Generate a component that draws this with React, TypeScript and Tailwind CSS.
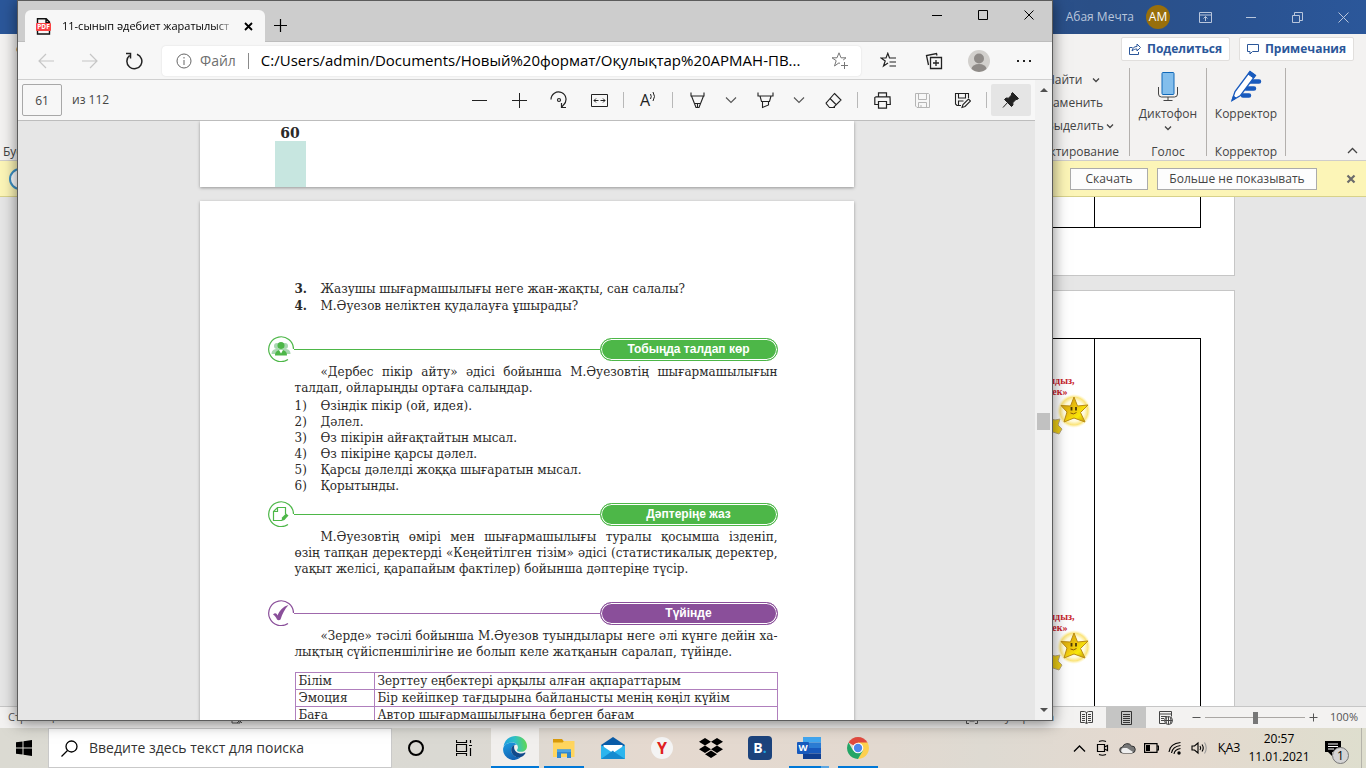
import type { ReactNode } from "react";

type IconProps = {
  size?: number;
  width?: number;
  className?: string;
  sw?: number;
  children: ReactNode;
};

const Icon = ({ size = 18, width, className = "", sw = 1, children }: IconProps) => (
  <svg
    width={width ?? size}
    height={size}
    viewBox={`0 0 ${width ?? size} ${size}`}
    fill="none"
    stroke="currentColor"
    strokeWidth={sw}
    className={`shrink-0 ${className}`}
    aria-hidden="true"
  >
    {children}
  </svg>
);

const Chevron = ({ className = "" }: { className?: string }) => (
  <Icon size={8} sw={1.3} className={className}>
    <path d="M1 2.5l3 3 3-3" />
  </Icon>
);

/* ---------- Word window ---------- */

const WordTitleBar = () => (
  <header className="flex h-[34px] shrink-0 items-center justify-end bg-[linear-gradient(90deg,#2b579a_0%,#2b579a_60%,#2a4f87_80%,#2a5392_92%,#2b579a_100%)] text-[#b9c6dc]">
    <span className="text-xs">Абая Мечта</span>
    <span className="ml-3 flex size-6 items-center justify-center rounded-full bg-[#986f0b] text-xs text-white">AM</span>
    <div className="ml-3 flex">
      <button aria-label="Параметры ленты" className="flex h-8 w-[46px] items-center justify-center">
        <Icon size={13}>
          <path d="M.5 1.500h12v10H.5zM.5 4h12M6.500 10V5.500M4.500 7.500l2-2 2 2" />
        </Icon>
      </button>
      <button aria-label="Свернуть Word" className="flex h-8 w-[46px] items-center justify-center">
        <Icon size={10}>
          <path d="M0 5.500h10" />
        </Icon>
      </button>
      <button aria-label="Восстановить" className="flex h-8 w-[46px] items-center justify-center">
        <Icon size={11}>
          <path d="M.5 3.500h7v7h-7zM2.500 3.500v-3h8v8h-3" />
        </Icon>
      </button>
      <button aria-label="Закрыть Word" className="flex h-8 w-[46px] items-center justify-center">
        <Icon size={11}>
          <path d="M.5.5l10 10M10.500.5l-10 10" />
        </Icon>
      </button>
    </div>
  </header>
);

const Ribbon = () => (
  <section className="flex h-[127px] shrink-0 flex-col border-b border-[#cfcdcb] bg-[#f3f2f1] text-xs text-[#444]">
    <div className="flex h-[34px] items-start justify-between pl-4 pr-3">
      <a href="#file" className="pt-2 text-[#444]">Файл</a>
      <div className="flex gap-[9px] pt-[3px] font-bold text-[#2b579a]">
        <button className="flex h-6 w-[109px] items-center justify-center gap-1.5 rounded-xs border border-[#e1dfdd] bg-white">
          <Icon size={12}>
            <path d="M3.500 4.500h-3v7h9V9M3 8c.5-3 2-4.500 5-4.500V1l3.500 3.500L8 8V6C6 6 4.500 6.500 3 8z" />
          </Icon>
          Поделиться
        </button>
        <button className="flex h-6 w-[115px] items-center justify-center gap-1.5 rounded-xs border border-[#e1dfdd] bg-white">
          <Icon size={12}>
            <path d="M.5 1.500h11v7h-6L3 11V8.500H.5z" />
          </Icon>
          Примечания
        </button>
      </div>
    </div>
    <div className="flex flex-1 justify-between pb-1">
      <div className="flex flex-col justify-between pl-[3px]">
        <button className="mt-9 pl-3">Вставить</button>
        <span className="leading-2">Буфер обмена</span>
      </div>
      <div className="flex">
        <div className="flex flex-col justify-between">
          <div className="flex flex-col items-start gap-[7px] pl-6 pt-1">
            <button className="flex items-center gap-2.5">Найти <Chevron /></button>
            <button>Заменить</button>
            <button className="flex items-center gap-0.5">Выделить <Chevron /></button>
          </div>
          <span className="pr-2.5 leading-2">Редактирование</span>
        </div>
        <div className="flex w-[77px] flex-col items-center justify-between border-l border-[#b3b0ad]">
          <button className="flex flex-col items-center pt-1">
            <Icon size={30} width={20}>
              <path d="M.5 15v7a3 3 0 003 3h13a3 3 0 003-3v-7M10 25v3M5.500 28.500h9" stroke="#444" />
              <rect x="4" y=".5" width="12" height="22" rx="1" fill="#83beec" stroke="#1068b8" />
            </Icon>
            <span className="mt-1">Диктофон</span>
            <Chevron className="mt-0.5" />
          </button>
          <span className="leading-2">Голос</span>
        </div>
        <div className="flex w-20 flex-col items-center justify-between border-x border-[#b3b0ad]">
          <button className="flex flex-col items-center pt-0.5">
            <Icon size={32} className="text-[#185abd]">
              <path d="M19 11.500h10M16 18.500h8M13 25.500h6" strokeWidth="4.500" strokeLinecap="round" />
              <path d="M2 30.500l3-9L20 1.500l5.500 4L10.500 25.500z" fill="#fff" strokeWidth="1.300" />
              <path d="M18 4l2-2.500 5.500 4-2 2.500zM2 30.500l1.500-4.500 2.500 2z" fill="#185abd" />
            </Icon>
            <span className="mt-1">Корректор</span>
          </button>
          <span className="leading-2">Корректор</span>
        </div>
        <button aria-label="Свернуть ленту" className="flex w-20 items-end justify-end pr-2">
          <Icon size={11} sw={1.3}>
            <path d="M1 8l4.500-4.500L10 8" />
          </Icon>
        </button>
      </div>
    </div>
  </section>
);

const NoticeBar = () => (
  <section className="flex h-9 shrink-0 items-center justify-between border-b border-[#d8d28a] bg-[#fcf5b7] pl-[9px] pr-[10px] text-xs text-[#444]">
    <span className="size-[22px] rounded-full border-2 border-[#3b8fc4] bg-white" />
    <div className="flex items-center">
      <button className="h-[22px] w-[78px] border border-[#ababab] bg-[#fdfdfd]">Скачать</button>
      <button className="ml-[9px] h-[22px] w-40 border border-[#ababab] bg-[#fdfdfd]">Больше не показывать</button>
      <button aria-label="Закрыть сообщение" className="ml-[29px] text-[#6b6b6b]">
        <Icon size={10} sw={2.2}>
          <path d="M1.500 1.500l7 7M8.500 1.500l-7 7" />
        </Icon>
      </button>
    </div>
  </section>
);

const Star = () => (
  <svg width="46" height="42" viewBox="0 3 46 42" className="shrink-0 overflow-visible" aria-hidden="true">
    <defs>
      <radialGradient id="glow">
        <stop offset="0.6" stopColor="#fffbe0" />
        <stop offset="0.82" stopColor="#fbe47a" />
        <stop offset="1" stopColor="#fff6c0" stopOpacity="0" />
      </radialGradient>
      <linearGradient id="gold" x1="0" y1="0" x2="1" y2="1">
        <stop offset="0" stopColor="#c8920c" />
        <stop offset="0.5" stopColor="#f0c80e" />
        <stop offset="0.7" stopColor="#f8e808" />
        <stop offset="1" stopColor="#b8860b" />
      </linearGradient>
    </defs>
    <path d="M0 24l7 2 5-1-2 6 4 4-3 5-9-3z" fill="#eccd18" stroke="#b9a877" strokeWidth="1" />
    <circle cx="26" cy="17" r="17" fill="url(#glow)" />
    <path d="M26 3l3.500 9 10.500-1-7.500 7.500L37 28l-11-4-10 4 3-10-6-6.500 9.500.5z" fill="url(#gold)" stroke="#b98b14" strokeWidth="1" strokeLinejoin="round" />
    <path d="M23.500 13v3.500M28 13v3.500" stroke="#4c3a08" strokeWidth="1.800" />
    <path d="M22.500 19q3 2 6-.5" fill="none" stroke="#8a5a08" />
  </svg>
);

const StarNote = () => (
  <div className="flex flex-col items-end text-[10px] font-bold leading-[11px] text-[#c8232c]">
    <span className="pr-[19px]">«Екі жұлдыз,</span>
    <span className="pr-[26px]">бір тілек»</span>
    <Star />
  </div>
);

const WordDocument = () => (
  <main className="min-h-0 flex-1 overflow-hidden bg-[#e6e6e6] font-['Liberation_Serif',serif]">
    <div className="mx-auto h-[79px] w-[1103px] border-b border-r border-[#c6c6c6] bg-white pl-20 pr-[33px]">
      <div className="flex h-[31px] border-b border-r border-black">
        <div className="flex-1 border-r border-black" />
        <div className="w-[105px]" />
      </div>
    </div>
    <div className="mx-auto mt-3.5 h-[620px] w-[1103px] border border-[#c6c6c6] bg-white pl-20 pr-[33px] pt-[47px]">
      <div className="flex h-full border-r border-t border-black">
        <div className="flex flex-1 flex-col items-end gap-[172px] border-r border-black pt-9">
          <StarNote />
          <StarNote />
        </div>
        <div className="w-[105px]" />
      </div>
    </div>
  </main>
);

const WordStatusBar = () => (
  <footer className="flex h-[22px] shrink-0 items-center justify-between border-t border-[#c6c6c6] bg-[#f3f2f1] pl-2 pr-2 text-[11px] text-[#555]">
    <div className="flex items-center gap-5">
      <span>Страница 5 из 43</span>
      <span>Число слов: 5691</span>
      <Icon size={12}>
        <path d="M1 1h8v10H1zM6 6l5 5M11 6l-5 5" />
      </Icon>
    </div>
    <div className="flex items-center">
      <button className="flex items-center gap-1.5 pr-3">
        <Icon size={12}>
          <path d="M3 .5H.5v11H3M9 .5h2.500v11H9M3.500 3h5v6h-5z" />
        </Icon>
        Фокусировка
      </button>
      <button aria-label="Режим чтения" className="flex h-[21px] w-10 items-center justify-center text-[#444]">
        <Icon size={13}>
          <path d="M.5.5h4l2 1 2-1h4v11h-4l-2 1-2-1h-4zM6.500 1.500v11M2 3.500h3M2 5.500h3M2 7.500h3M2 9.500h3M8 3.500h3M8 5.500h3M8 7.500h3M8 9.500h3" />
        </Icon>
      </button>
      <button aria-label="Разметка страницы" className="flex h-[21px] w-10 items-center justify-center bg-[#c5c5c4] text-[#333]">
        <Icon size={14} width={11}>
          <path d="M.5.5h10v13H.5zM2 3.500h7M2 5.500h7M2 7.500h7M2 9.500h7M2 11.500h7" />
        </Icon>
      </button>
      <button aria-label="Веб-документ" className="flex h-[21px] w-10 items-center justify-center text-[#444]">
        <Icon size={14}>
          <path d="M6 12.500H.5V.5h12v5M.5 3h12M2 5.500h6M2 7.500h3M2 9.500h3" />
          <circle cx="9.500" cy="9.500" r="4" fill="#f3f2f1" />
          <path d="M5.500 9.500h8M9.500 5.500v8M7.500 6.500q-1 3 0 6M11.500 6.500q1 3 0 6" />
        </Icon>
      </button>
      <button aria-label="Уменьшить масштаб" className="ml-1.5 flex">
        <Icon size={9}>
          <path d="M.5 4.500h8" />
        </Icon>
      </button>
      <input
        type="range"
        aria-label="Масштаб документа"
        defaultValue={50}
        className="mx-1 h-3 w-[100px] appearance-none bg-[linear-gradient(#aaa7a4,#aaa7a4)] bg-[length:100%_1px] bg-center bg-no-repeat [&::-webkit-slider-thumb]:h-3 [&::-webkit-slider-thumb]:w-[5px] [&::-webkit-slider-thumb]:appearance-none [&::-webkit-slider-thumb]:bg-[#777]"
      />
      <button aria-label="Увеличить масштаб" className="flex">
        <Icon size={9}>
          <path d="M.5 4.500h8M4.500.5v8" />
        </Icon>
      </button>
      <span className="w-10 text-right">100%</span>
    </div>
  </footer>
);

/* ---------- Edge window ---------- */

const TabStrip = () => (
  <header className="flex h-[41px] shrink-0 justify-between border-b border-[#bdbdbd] bg-[#cdcdcd] text-black">
    <div className="flex items-end pl-[7px]">
      <div className="-mb-px flex h-8 w-60 items-center rounded-t-md bg-[#f7f7f7] pl-[11px] pr-3">
        <svg width="15" height="17" viewBox="0 0 15 17" className="shrink-0" aria-hidden="true">
          <path d="M1.500 6V.8h8.700L13.500 4v2M1.500 12v4h12v-4M10 1v3.500h3" fill="none" stroke="#111" strokeWidth="1.400" />
          <rect y="5" width="15" height="8" rx="1" fill="#fb4343" />
          <text x="7.500" y="11.300" textAnchor="middle" fontSize="6.500" fontWeight="bold" fill="#fff">PDF</text>
        </svg>
        <span className="ml-[11px] min-w-0 flex-1 whitespace-nowrap text-[11px] [mask-image:linear-gradient(90deg,#000_88%,transparent)]">
          11-сынып әдебиет жаратылыст
        </span>
        <button aria-label="Закрыть вкладку" className="ml-2 flex">
          <Icon size={9} sw={1.8}>
            <path d="M1 1l7 7M8 1L1 8" />
          </Icon>
        </button>
      </div>
      <button aria-label="Новая вкладка" className="mb-[9px] ml-[9px] flex">
        <Icon size={13} sw={1.2}>
          <path d="M6.500 0v13M0 6.500h13" />
        </Icon>
      </button>
    </div>
    <div className="flex h-7">
      <button aria-label="Свернуть" className="flex w-[46px] items-center justify-center">
        <Icon size={10}>
          <path d="M0 5.500h10" />
        </Icon>
      </button>
      <button aria-label="Развернуть" className="flex w-[46px] items-center justify-center">
        <Icon size={10}>
          <path d="M.5.5h9v9h-9z" />
        </Icon>
      </button>
      <button aria-label="Закрыть" className="flex w-[46px] items-center justify-center">
        <Icon size={10}>
          <path d="M.5.5l9 9M9.500.5l-9 9" />
        </Icon>
      </button>
    </div>
  </header>
);

const navButton = "flex h-9 items-center justify-center";

const AddressBar = () => (
  <nav className="flex h-[38px] shrink-0 items-center border-b border-[#d0d0d0] bg-[#f7f7f7] pl-1.5 pr-1.5 text-[#222]">
    <button aria-label="Назад" disabled className={`${navButton} w-11 text-[#c6c6c6]`}>
      <Icon size={16} sw={1.2}>
        <path d="M8 1L1 8l7 7M1 8h15" />
      </Icon>
    </button>
    <button aria-label="Вперёд" disabled className={`${navButton} w-11 text-[#c6c6c6]`}>
      <Icon size={16} sw={1.2}>
        <path d="M8 1l7 7-7 7M0 8h15" />
      </Icon>
    </button>
    <button aria-label="Обновить" className={`${navButton} w-11`}>
      <Icon size={18} sw={1.5}>
        <path d="M12 2.200A7.500 7.500 0 114.500 3.500M1 1.500h4.500V6.500" />
      </Icon>
    </button>
    <div className="ml-1.5 flex h-[30px] flex-1 items-center rounded bg-white pl-3.5 pr-3 shadow-[0_0_2px_rgba(0,0,0,0.12)]">
      <Icon size={16} className="text-[#666]">
        <circle cx="8" cy="8" r="7" />
        <path d="M8 7v5M8 4v1.500" />
      </Icon>
      <span className="ml-2 text-sm text-[#6f6f6f]">Файл</span>
      <span className="mx-3 h-4 w-px bg-[#8a8a8a]" />
      <input
        aria-label="Адрес"
        readOnly
        value="C:/Users/admin/Documents/Новый%20формат/Оқулықтар%20АРМАН-ПВ..."
        className="min-w-0 flex-1 bg-transparent text-[15px] text-black outline-none"
      />
      <button aria-label="Добавить в избранное" className="ml-3 flex text-[#777]">
        <Icon size={18}>
          <path d="M9 11.500L8 10.800 3.500 14l1.700-5.300L1 5.800h5L8 .8l2 5h5l-2.800 2.200M13.500 10v7M10 13.500h7" />
        </Icon>
      </button>
    </div>
    <button aria-label="Избранное" className={`${navButton} ml-[5px] w-[45px]`}>
      <Icon size={18} sw={1.2}>
        <path d="M8 11l-4.500 3 1.700-5L1 6h5l1.800-4.700L9.500 6H16M9.500 10H16M9.500 14H16" />
      </Icon>
    </button>
    <button aria-label="Коллекции" className={`${navButton} w-[45px]`}>
      <Icon size={18} sw={1.3}>
        <path d="M5.500 5.500h11v11h-11zM11 8v6M8 11h6M3.500 13L1.500 3.500l10-2 .5 2" />
      </Icon>
    </button>
    <button aria-label="Профиль" className={`${navButton} w-[45px]`}>
      <svg width="22" height="22" viewBox="0 0 22 22" aria-hidden="true">
        <circle cx="11" cy="11" r="11" fill="#d2d0cd" />
        <circle cx="11" cy="8.500" r="5" fill="#8f8b88" />
        <path d="M3.500 19a7.500 5 0 0115 0A11 11 0 013.500 19z" fill="#8f8b88" />
      </svg>
    </button>
    <button aria-label="Параметры и другое" className={`${navButton} w-[45px]`}>
      <Icon size={16} sw={2}>
        <path d="M1 8h2M7 8h2M13 8h2" />
      </Icon>
    </button>
  </nav>
);

const Tool = ({ label, children, wide = true, disabled = false }: { label: string; children: ReactNode; wide?: boolean; disabled?: boolean }) => (
  <button aria-label={label} disabled={disabled} className={`flex h-8 items-center justify-center ${wide ? "w-10" : "w-7"} ${disabled ? "text-[#b5b5b5]" : ""}`}>
    {children}
  </button>
);

const Separator = () => <span className="mx-1 h-4 w-px bg-[#b8b8b8]" />;

const ToolChevron = () => (
  <Icon size={12} sw={1.1} className="text-[#555]">
    <path d="M1 3.500l5 5 5-5" />
  </Icon>
);

const PdfToolbar = () => (
  <div className="flex h-[41px] shrink-0 items-center justify-between border-b border-[#bdbdbd] bg-[#f7f7f7] pl-1 pr-1 text-[#222]">
    <label className="flex items-center gap-2.5 text-xs text-[#444]">
      <input aria-label="Страница" defaultValue="61" className="h-8 w-10 rounded-xs border border-[#a8a8a8] bg-[#f7f7f7] text-center outline-none" />
      из 112
    </label>
    <div className="flex items-center">
      <Tool label="Уменьшить"><Icon size={15}><path d="M0 7.500h15" /></Icon></Tool>
      <Tool label="Увеличить"><Icon size={15}><path d="M0 7.500h15M7.500 0v15" /></Icon></Tool>
      <Tool label="Повернуть">
        <Icon size={18} sw={1.2}>
          <path d="M1 8.500a7.500 7.500 0 1112.500 5.500L11.500 16.500M11.500 12v4.500H16" />
          <circle cx="9" cy="9" r="1.500" />
        </Icon>
      </Tool>
      <Tool label="По ширине">
        <Icon size={17}>
          <path d="M.5 2.500h16v12H.5zM3 8.500h4.500M9.500 8.500H14M5 6.500l-2 2 2 2M12 6.500l2 2-2 2" />
        </Icon>
      </Tool>
      <Separator />
      <Tool label="Прочесть вслух">
        <span className="text-base leading-4">A</span>
        <Icon size={14} width={6} className="-mt-1.5">
          <path d="M.5 4q1.500 2.500 0 5M3 2q3 4.500 0 9" />
        </Icon>
      </Tool>
      <Separator />
      <Tool label="Рукописный ввод">
        <Icon size={17} sw={1.1}>
          <path d="M2 .5v3.500h13V.5M2.500 4L7 15.500h3L14.500 4M6 11.500h5M8.500 12v4" />
        </Icon>
      </Tool>
      <Tool label="Параметры пера" wide={false}><ToolChevron /></Tool>
      <Tool label="Выделение">
        <Icon size={17} sw={1.1}>
          <path d="M1 .5v3.500h15V.5M3 4l1.500 5.500h8L14 4M4.500 9.500h8M5.500 9.500v6l6-2.500V9.500" />
        </Icon>
      </Tool>
      <Tool label="Параметры выделения" wide={false}><ToolChevron /></Tool>
      <Tool label="Ластик">
        <Icon size={17} sw={1.1}>
          <path d="M9.500 1.500L16 8l-7.500 7.500h-4L1.500 12a1 1 0 010-1.500zM5 6.500l6.500 6.500M4 15.500h6" />
        </Icon>
      </Tool>
      <Separator />
      <Tool label="Печать">
        <Icon size={17} sw={1.2}>
          <path d="M4.500 5V.8h8V5M4.500 12.500H.8V5.500L2 4.800h14l.3 7.700h-3.800M4.500 9.500h8v6.700h-8z" />
        </Icon>
      </Tool>
      <Tool label="Сохранить" disabled>
        <Icon size={15}>
          <path d="M.5.5h13l1 1v13H2l-1.500-1.500zM3.500.5v6h8v-6M3.500 14.500v-5h8v5M6 12v2" />
        </Icon>
      </Tool>
      <Tool label="Сохранить как">
        <Icon size={17} sw={1.1}>
          <path d="M7 13.500H3L1.500 12V1.500h13V6M4.500 1.500v4.500h7V1.500M4.500 13v-4h5M8 15.500l1-3 5.500-5.500 2 2L11 14.500z" />
        </Icon>
      </Tool>
      <Separator />
      <button aria-label="Закрепить панель" className="flex h-8 w-10 items-center justify-center rounded-xs bg-[#e5e5e5]">
        <Icon size={18}>
          <path d="M10.500 1.500l6 6-1.500 1-1 0-3.200 3.200.2 2.300-1.500 1.500-7-7L4 7l2.500.2L9.500 4V2.500zM6 11l-5 5.500" fill="currentColor" />
        </Icon>
      </button>
    </div>
  </div>
);

const GroupIcon = () => (
  <>
    <g fill="#a8d8b0">
      <circle cx="9" cy="10" r="3" />
      <circle cx="17" cy="10" r="3" />
      <path d="M3.500 18c0-4 3-5 5.500-5h8c3 0 5.500 1 5.500 5z" />
    </g>
    <g fill="#4db748">
      <circle cx="13" cy="9.500" r="3.500" />
      <path d="M7 19.500c0-4 2.500-5.500 6-5.500s6 1.500 6 5.500z" />
    </g>
    <path d="M11 14l2 3.500 2-3.500z" fill="#fff" />
  </>
);

const NoteIcon = () => (
  <>
    <path d="M14 19.500H5.500v-9l4-4h8V13M9.500 6.500v4h-4" fill="none" stroke="#4db748" strokeWidth="1.200" />
    <path d="M13.500 20l.5-3.500 4-4 2.500 2-4 4.500z" fill="#4db748" />
  </>
);

const CheckIcon = () => <path d="M5 14.500c2-2 3.500-1.500 4.500 1C11.500 10.500 15 6.500 20.500 5c-4 4.500-6 8.500-8 14.500-1 1-2.500 1-3.500 0-.8-2-2-4-4-5z" fill="#8a4f9a" />;

const Banner = ({ title, tone, children }: { title: string; tone: "green" | "purple"; children: ReactNode }) => {
  const green = tone === "green";
  return (
    <div className="flex h-[26px] items-center">
      <svg width="26" height="26" viewBox="0 0 26 26" className="shrink-0" aria-hidden="true">
        <path d="M20 23.500A12.400 12.400 0 1125.500 13" fill="none" stroke={green ? "#4db748" : "#8a4f9a"} strokeWidth="1.200" />
        {children}
      </svg>
      <span className={`h-px flex-1 ${green ? "bg-[#4db748]" : "bg-[#9f68ac]"}`} />
      <h2
        className={`flex h-[23px] w-[178px] items-center justify-center rounded-full border font-['Liberation_Sans',sans-serif] text-xs font-bold text-white shadow-[inset_0_0_0_1px_white] ${
          green ? "border-[#4db748] bg-[#4db748]" : "border-[#8a4f9a] bg-[#8a4f9a]"
        }`}
      >
        {title}
      </h2>
    </div>
  );
};

const questions = [
  ["3.", "Жазушы шығармашылығы неге жан-жақты, сан салалы?"],
  ["4.", "М.Әуезов неліктен қудалауға ұшырады?"],
];

const steps = [
  ["1)", "Өзіндік пікір (ой, идея)."],
  ["2)", "Дәлел."],
  ["3)", "Өз пікірін айғақтайтын мысал."],
  ["4)", "Өз пікіріне қарсы дәлел."],
  ["5)", "Қарсы дәлелді жоққа шығаратын мысал."],
  ["6)", "Қорытынды."],
];

const rows = [
  ["Білім", "Зерттеу еңбектері арқылы алған ақпараттарым"],
  ["Эмоция", "Бір кейіпкер тағдырына байланысты менің көңіл күйім"],
  ["Баға", "Автор шығармашылығына берген бағам"],
];

const justified = "block whitespace-nowrap [text-align-last:justify]";

const PdfPage = () => (
  <article className="mx-auto mt-3.5 h-[925px] w-[654px] bg-white pl-[68px] pr-[76px] pt-20 font-['DejaVu_Serif',serif] text-xs text-[#2b2a29] shadow-[0_1px_3px_rgba(0,0,0,0.35)]">
    <ul className="pl-[27px] leading-[17px]">
      {questions.map(([n, text]) => (
        <li key={n} className="flex">
          <b className="w-[26px]">{n}</b>
          <span>{text}</span>
        </li>
      ))}
    </ul>
    <div className="mt-[21px]">
      <Banner title="Тобыңда талдап көр" tone="green"><GroupIcon /></Banner>
    </div>
    <p className="mt-0.5 pl-[27px] leading-4">
      <span className={`${justified} pl-[26px]`}>«Дербес пікір айту» әдісі бойынша М.Әуезовтің шығармашылығын</span>
      талдап, ойларыңды ортаға салыңдар.
    </p>
    <ul className="mt-0.5 pl-[27px] leading-4">
      {steps.map(([n, text]) => (
        <li key={n} className="flex">
          <span className="w-[26px]">{n}</span>
          <span>{text}</span>
        </li>
      ))}
    </ul>
    <div className="mt-[7px]">
      <Banner title="Дәптеріңе жаз" tone="green"><NoteIcon /></Banner>
    </div>
    <p className="mt-0.5 pl-[27px] leading-4">
      <span className={`${justified} pl-[26px]`}>М.Әуезовтің өмірі мен шығармашылығы туралы қосымша ізденіп,</span>
      <span className={justified}>өзің тапқан деректерді «Кеңейтілген тізім» әдісі (статистикалық деректер,</span>
      уақыт желісі, қарапайым фактілер) бойынша дәптеріңе түсір.
    </p>
    <div className="mt-[23px]">
      <Banner title="Түйінде" tone="purple"><CheckIcon /></Banner>
    </div>
    <p className="mt-0.5 pl-[27px] leading-4">
      <span className={`${justified} pl-[26px]`}>«Зерде» тәсілі бойынша М.Әуезов туындылары неге әлі күнге дейін ха-</span>
      лықтың сүйіспеншілігіне ие болып келе жатқанын саралап, түйінде.
    </p>
    <div className="mt-3 pl-[27px]">
      <table className="w-full border-collapse leading-4">
        <tbody>
          {rows.map(([name, text]) => (
            <tr key={name}>
              <td className="w-[79px] border border-[#b07fbd] px-[3px]">{name}</td>
              <td className="border border-[#b07fbd] px-[3px]">{text}</td>
            </tr>
          ))}
        </tbody>
      </table>
    </div>
  </article>
);

const EdgeWindow = () => (
  <section className="absolute bottom-[47px] left-[17px] right-[313px] top-0 flex flex-col border border-[#5c5c5c] bg-[#e6e6e6] shadow-[0_2px_14px_rgba(0,0,0,0.5)]">
    <TabStrip />
    <AddressBar />
    <div className="flex min-h-0 flex-1">
      <div className="flex min-w-0 flex-1 flex-col">
        <PdfToolbar />
        <div className="min-h-0 flex-1 overflow-hidden">
          <div className="mx-auto flex h-[66px] w-[654px] flex-col bg-white pl-[75px] font-['DejaVu_Serif',serif] shadow-[0_1px_3px_rgba(0,0,0,0.35)]">
            <b className="w-[31px] pt-1 text-center text-sm leading-4 text-[#2b2a29]">60</b>
            <div className="w-[31px] flex-1 bg-[#c7e6e0]" />
          </div>
          <PdfPage />
        </div>
      </div>
      <div className="flex w-[17px] flex-col items-center justify-between bg-[#f1f1f1] py-1.5 text-[#505050]">
        <Icon size={8}><path d="M0 6l4-4 4 4z" fill="currentColor" stroke="none" /></Icon>
        <span className="mt-[43px] h-[17px] w-[13px] bg-[#c1c1c1]" />
        <Icon size={8}><path d="M0 2l4 4 4-4z" fill="currentColor" stroke="none" /></Icon>
      </div>
    </div>
  </section>
);

/* ---------- Taskbar ---------- */

const EdgeLogo = () => (
  <svg width="24" height="24" viewBox="0 0 24 24" aria-hidden="true">
    <defs>
      <linearGradient id="edgeTop" x1="0" y1="0.5" x2="1" y2="0.4">
        <stop offset="0" stopColor="#1f9fe0" />
        <stop offset="0.5" stopColor="#2fc2c8" />
        <stop offset="1" stopColor="#62d84e" />
      </linearGradient>
      <linearGradient id="edgeLeft" x1="0" y1="0" x2="0.4" y2="1">
        <stop offset="0" stopColor="#1b9de2" />
        <stop offset="1" stopColor="#1464b4" />
      </linearGradient>
    </defs>
    <path d="M.5 10.500C1.500 4 6.500 0 12.500 0 19 0 24 4.800 24 10c0 3.600-2.600 5.800-6 5.800-3 0-4.300-1-4-1.900.3-.6 1-1.200.9-2.700C14.800 8.500 12.300 6.500 9 6.500c-3.500 0-6.500 1.600-8.500 4z" fill="url(#edgeTop)" />
    <path d="M.2 12C.8 8.800 4.500 6.500 9 6.500c2.400 0 4.200 1 5.100 2.300-3.300-.6-6.300 2-5.900 5.600.5 4.400 4.800 7.500 9.300 6.600-1.500 1.700-3.500 2.600-6 2.900C5 24.300-.8 18.500.2 12z" fill="url(#edgeLeft)" />
    <path d="M8.200 14.400c-.3-2.500 1-4.600 3.200-5.400-1.200 4 1.100 7.900 5.600 8.400 2 .2 3.600-.2 5-.9.4 0 .6.300.4.700-1.300 2.200-3.200 3.500-5.100 4-4.300.7-8.600-2.400-9.100-6.800z" fill="#114a8b" />
  </svg>
);

const FolderLogo = () => (
  <svg width="22" height="19" viewBox="0 0 22 19" aria-hidden="true">
    <path d="M0 0h9l1.500 2H21v5H0z" fill="#d99a0a" />
    <path d="M0 3.500h9.500L11 2h10.500v16H0z" fill="#ffd55e" />
    <path d="M4 10.500h14V19h-4v-4.500H8V19H4z" fill="#2f87d0" />
    <path d="M4 10.500h14v2.500H4z" fill="#4aa3e4" />
  </svg>
);

const MailLogo = () => (
  <svg width="24" height="22" viewBox="0 0 24 22" aria-hidden="true">
    <path d="M0 8L12 0l12 8v3H0z" fill="#0a5ca8" />
    <path d="M2.500 8h19v8h-19z" fill="#fff" />
    <path d="M0 8l12 8L24 8v14H0z" fill="#2cb5ee" />
    <path d="M0 22l12-8.500 1 1.200L24 22z" fill="#158bd0" />
  </svg>
);

const DropboxLogo = () => (
  <svg width="24" height="21" viewBox="0 0 24 21" aria-hidden="true">
    <path d="M6 0l6 3.700L6 7.500 0 3.700zM18 0l6 3.700-6 3.800-6-3.800zM6 7.500l6 3.800L6 15 0 11.300zM18 7.500l6 3.800-6 3.700-6-3.700zM6 16.200l6-3.800 6 3.800-6 3.800z" fill="#000" />
  </svg>
);

const WordLogo = () => (
  <svg width="24" height="22" viewBox="0 0 24 22" aria-hidden="true">
    <path d="M6 0h18v5.500H6z" fill="#41a5ee" />
    <path d="M6 5.500h18V11H6z" fill="#2b7cd3" />
    <path d="M6 11h18v5.500H6z" fill="#185abd" />
    <path d="M6 16.500h18V22H6z" fill="#103f91" />
    <rect y="5" width="12" height="12" rx="1" fill="#185abd" />
    <text x="6" y="14.200" textAnchor="middle" fontSize="9.500" fontWeight="bold" fill="#fff">W</text>
  </svg>
);

const ChromeLogo = () => (
  <svg width="22" height="22" viewBox="0 0 22 22" aria-hidden="true">
    <path d="M11 11L1.500 5.500a11 11 0 0119 0z" fill="#e04a3f" />
    <path d="M11 11V5.500h9.500A11 11 0 0111 22l4.800-8.300z" fill="#fdd04e" />
    <path d="M11 11l4.800 2.700L11 22A11 11 0 011.500 5.500l4.700 8.200z" fill="#23a566" />
    <circle cx="11" cy="11" r="5.300" fill="#fff" />
    <circle cx="11" cy="11" r="4.200" fill="#4d87ee" />
  </svg>
);

const apps = [
  { name: "Microsoft Edge", state: "active", icon: <EdgeLogo /> },
  { name: "Проводник", state: "open", icon: <FolderLogo /> },
  { name: "Почта", state: "", icon: <MailLogo /> },
  {
    name: "Яндекс",
    state: "",
    icon: <span className="flex size-[22px] items-center justify-center rounded-full bg-[#f4f4f4] text-base font-bold text-[#e02020]">Y</span>,
  },
  { name: "Dropbox", state: "", icon: <DropboxLogo /> },
  {
    name: "Booking",
    state: "",
    icon: (
      <span className="flex size-6 items-center justify-center rounded-sm bg-[#1c437c] text-sm font-bold text-white">
        B<span className="text-[#1ba0e2]">.</span>
      </span>
    ),
  },
  { name: "Word", state: "multi", icon: <WordLogo /> },
  { name: "Google Chrome", state: "open", icon: <ChromeLogo /> },
];

const Taskbar = () => (
  <footer className="flex h-10 shrink-0 items-center justify-between bg-[linear-gradient(90deg,#dbdad2_0%,#dad9d3_33%,#e5d9cf_48%,#e2d9d0_65%,#dedad2_72%,#e5d9cf_85%,#dedece_100%)] text-black">
    <div className="flex h-full items-center">
      <button aria-label="Пуск" className="flex h-full w-12 items-center justify-center">
        <svg width="16" height="16" viewBox="0 0 16 16" aria-hidden="true">
          <path d="M0 2.300L6.500 1.400v6.100H0zM7.500 1.200L16 0v7.500H7.500zM0 8.500h6.500v6.100L0 13.700zM7.500 8.500H16V16l-8.500-1.200z" />
        </svg>
      </button>
      <label className="flex h-full w-[344px] items-center border border-[#c9c9c9] bg-white pl-3">
        <Icon size={17} sw={1.3}>
          <circle cx="10.500" cy="6.500" r="5.500" />
          <path d="M6.500 10.500L.5 16.500" />
        </Icon>
        <input
          aria-label="Поиск"
          placeholder="Введите здесь текст для поиска"
          className="ml-[11px] min-w-0 flex-1 bg-transparent text-sm outline-none placeholder:text-[#333]"
        />
      </label>
      <button aria-label="Кортана" className="flex h-full w-12 items-center justify-center">
        <Icon size={16} sw={2}>
          <circle cx="8" cy="8" r="7" />
        </Icon>
      </button>
      <button aria-label="Представление задач" className="flex h-full w-12 items-center justify-center">
        <Icon size={16} sw={1.2}>
          <path d="M.5 0v2.500h10V0M.5 16v-2.500h10V16M.5 4.500h10v7H.5zM14.500 0v3M14.500 8v8M13 5.500h3" />
        </Icon>
      </button>
      <div className="ml-[3px] flex h-full gap-px">
        {apps.map(({ name, state, icon }) => (
          <button
            key={name}
            aria-label={name}
            className={`flex h-full w-12 flex-col items-center ${state === "active" ? "bg-[#f1efed]" : ""}`}
          >
            <span className="flex flex-1 items-center justify-center pt-0.5">{icon}</span>
            <span className={`flex h-0.5 ${state === "active" ? "w-full bg-[#0078d7]" : "w-10"} ${state === "open" ? "bg-[#0078d7]" : ""}`}>
              {state === "multi" && (
                <>
                  <i className="h-full w-8 bg-[#0078d7]" />
                  <i className="h-full w-2 bg-[#5ba6e2]" />
                </>
              )}
            </span>
          </button>
        ))}
      </div>
    </div>
    <div className="flex h-full items-center text-xs">
      <button aria-label="Скрытые значки" className="flex w-6 justify-center">
        <Icon size={13} sw={1.3}><path d="M1 9.500L6.500 4 12 9.500" /></Icon>
      </button>
      <span className="flex w-6 justify-center">
        <Icon size={16} sw={1.2}>
          <path d="M4 1.500q3.500-1.500 7 0M4 14.500q3.500 1.500 7 0M2.500 4.500h7v7h-7zM9.500 7l3-1.500v5l-3-1.500" />
        </Icon>
      </span>
      <span className="flex w-6 justify-center">
        <Icon size={12} width={17}>
          <path d="M4 11a3 3 0 01-.5-6A5 5 0 0112.500 4a3.500 3.500 0 01.5 7z" fill="#777" stroke="#333" />
          <path d="M4.500 11a2.500 2.500 0 01.5-5l3 0 6 4-1 1z" fill="#eee" stroke="none" />
        </Icon>
      </span>
      <span className="flex w-6 justify-center">
        <Icon size={10} width={15} sw={1.2}>
          <path d="M.6.6h12.400v8.800H.6zM13 3h1.500v4H13" />
          <path d="M2 2h4v6H2z" fill="currentColor" stroke="none" />
        </Icon>
      </span>
      <span className="flex w-6 justify-center">
        <Icon size={14} sw={1.1}>
          <path d="M1 11Q2 2.500 12.500 1.500M3.500 12Q4.500 5.500 12.500 4.500M6 13Q6.500 8.500 12.500 7.500" />
          <circle cx="11" cy="12" r="1.700" fill="currentColor" stroke="none" />
        </Icon>
      </span>
      <span className="flex w-6 justify-center">
        <Icon size={14} width={17} sw={1.1}>
          <path d="M1 5h2.500L7 2v10L3.500 9H1zM9 5q1.500 2 0 4M11 3.500q2.500 3.500 0 7" />
          <path d="M13.500 1.500q3.500 5.500 0 11" stroke="#999" />
        </Icon>
      </span>
      <span className="w-9 text-center">ҚАЗ</span>
      <div className="w-16 text-center leading-[18px]">
        <div>20:57</div>
        <div>11.01.2021</div>
      </div>
      <button aria-label="Уведомления" className="relative ml-2.5 flex h-full w-10 items-center justify-start pl-1">
        <svg width="16" height="15" viewBox="0 0 16 15" aria-hidden="true">
          <path d="M0 0h16v11H7v4l-4-4H0z" />
          <path d="M3 3h10M3 5.500h10M3 8h6" stroke="#fff" />
        </svg>
        <span className="absolute bottom-1 right-3 flex size-[17px] items-center justify-center rounded-full border border-[#777] bg-[#d4d4d4] text-xs">1</span>
      </button>
      <span className="mr-1 h-full w-px bg-[#b4b3aa]" />
    </div>
  </footer>
);

const App = () => {
  return (
    <div className="relative flex h-screen flex-col overflow-hidden font-['Open_Sans','Noto_Sans',sans-serif]">
      <div className="flex min-h-0 flex-1 flex-col">
        <WordTitleBar />
        <Ribbon />
        <NoticeBar />
        <WordDocument />
        <WordStatusBar />
      </div>
      <EdgeWindow />
      <Taskbar />
    </div>
  );
};

export default App;
